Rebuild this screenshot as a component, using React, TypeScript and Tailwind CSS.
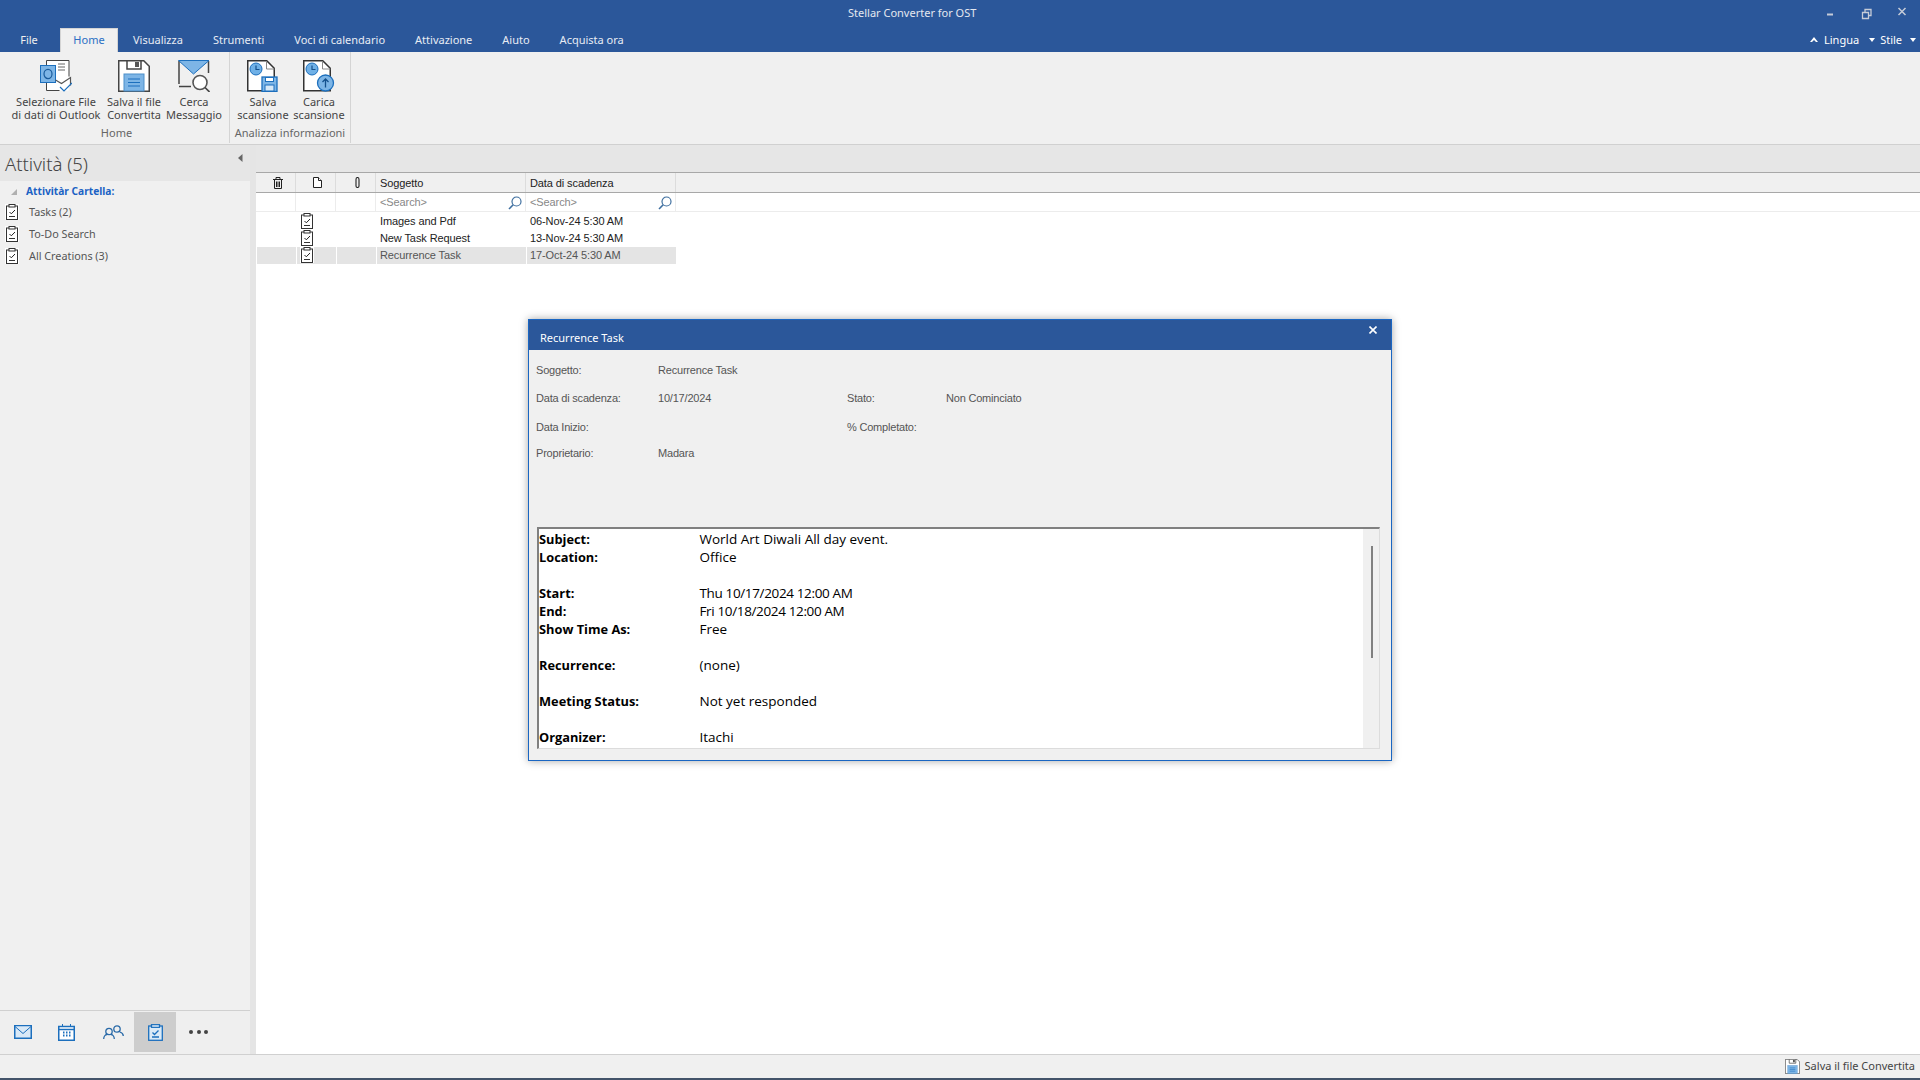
import React from "react";

const BLUE = "#1c6fbd";

const tabs = ["Visualizza", "Strumenti", "Voci di calendario", "Attivazione", "Aiuto", "Acquista ora"];

// icone ribbon
const OutlookIcon = () => (
  <svg width="32" height="32" viewBox="0 0 32 32" fill="none">
    <rect x="6.5" y=".5" width="22" height="30" fill="#fff" stroke="none" />
    <path d="M6.5 22v8.5h13M6.5 6V.5h22.500v16" stroke="#444" />
    <rect x=".5" y="5.5" width="15" height="17" fill="#7db5e6" stroke={BLUE} />
    <ellipse cx="8" cy="14" rx="4" ry="4.6" stroke="#1a5c9c" strokeWidth="1.2" />
    <path d="M18 4h7M18 7h7M18 10h7" stroke="#666" />
    <path d="M15.5 20l6 3.5 9-6v8" stroke="#555" strokeWidth="1.2" fill="#fff" />
    <path d="M20 27l4 4 8-8" stroke={BLUE} strokeWidth="1.2" />
  </svg>
);

const SaveIcon = ({ size = 32 }: { size?: number }) => (
  <svg width={size} height={size} viewBox="0 0 32 32" fill="none">
    <path d="M.75.75h25l5.5 5.5v25H.75z" fill="#fff" stroke="#444" strokeWidth="1.5" />
    <path d="M9 1v8h14V1" stroke="#444" strokeWidth="1.5" />
    <rect x="17" y="2" width="4" height="5" fill="#555" />
    <rect x="6" y="14" width="20" height="17" fill="#7db5e6" stroke="#4d8fca" />
    <path d="M10 19h12M10 22.500h12M10 26h12" stroke="#1c6fbd" strokeWidth="1.2" />
  </svg>
);

const SearchMailIcon = () => (
  <svg width="32" height="32" viewBox="0 0 32 32" fill="none">
    <path d="M1 24V1M1 26.500h12" stroke="#444" strokeWidth="1.5" />
    <path d="M30.500 1v12" stroke="#444" strokeWidth="1.5" />
    <path d="M.5.5h30.500L15.500 14z" fill="#7db5e6" stroke={BLUE} />
    <circle cx="22" cy="22.500" r="7" fill="#fff" stroke="#555" strokeWidth="1.6" />
    <path d="M27 27.500l4.500 4.500" stroke="#444" strokeWidth="1.6" />
  </svg>
);

const ScanPage = ({ children }: { children: React.ReactNode }) => (
  <svg width="32" height="32" viewBox="0 0 32 32" fill="none">
    <path d="M.75.750h19l7.500 7.500v22.500H.750z" fill="#fff" stroke="#333" strokeWidth="1.5" />
    <path d="M19.500 1v8h8" stroke="#888" />
    <circle cx="9" cy="9" r="6" fill="#6fb0e6" stroke={BLUE} />
    <path d="M9 5.500V9.500h3.500" stroke="#14508c" strokeWidth="1.2" />
    {children}
  </svg>
);

const SaveScanIcon = () => (
  <ScanPage>
    <rect x="15" y="17" width="15" height="14.500" fill="#7db5e6" stroke={BLUE} strokeWidth="1.300" />
    <rect x="18.500" y="17.500" width="8" height="4" fill="#fff" stroke={BLUE} />
    <rect x="18" y="25" width="9" height="6" fill="#d7e9f8" stroke={BLUE} />
  </ScanPage>
);

const LoadScanIcon = () => (
  <ScanPage>
    <circle cx="22.500" cy="23" r="8" fill="#7db5e6" stroke={BLUE} strokeWidth="1.300" />
    <path d="M22.500 27.500v-8M19.500 22l3-3 3 3" stroke="#14508c" strokeWidth="1.300" />
  </ScanPage>
);

// icona attività: clipboard con la spunta
const ClipIcon = () => (
  <svg width="14" height="16" viewBox="0 0 14 16" fill="none">
    <rect x="0" y="0" width="14" height="16" fill="#fff" />
    <rect x="1.500" y="2" width="11" height="13.500" stroke="#333" />
    <rect x="4" y=".5" width="6" height="2.500" fill="#fff" stroke="#333" />
    <path d="M4.500 8l1.800 1.800L10 6" stroke="#222" />
    <path d="M4 12.500h6" stroke="#333" />
  </svg>
);

const RibbonButton = ({ w, icon, lines }: { w: string; icon: React.ReactNode; lines: string[] }) => (
  <div className={`flex flex-col items-center ${w}`}>
    <div className="h-[32px] mt-[8px]">{icon}</div>
    <div className="mt-[3px] text-center text-[11px] leading-[13px] text-[#444] whitespace-nowrap">
      {lines.map((l) => (
        <div key={l}>{l}</div>
      ))}
    </div>
  </div>
);

const Ribbon = () => (
  <div className="flex h-[93px] shrink-0 border-b border-[#d0d0d0] bg-[#f0f0f0] font-['Noto_Sans',sans-serif]">
    <div className="relative flex h-[91px] w-[230px] border-r border-[#d4d4d4] pl-[8px]">
      <RibbonButton w="w-[96px] mr-[2px]" icon={<OutlookIcon />} lines={["Selezionare File", "di dati di Outlook"]} />
      <RibbonButton w="w-[56px] mr-[4px]" icon={<SaveIcon />} lines={["Salva il file", "Convertita"]} />
      <RibbonButton w="w-[56px]" icon={<SearchMailIcon />} lines={["Cerca", "Messaggio"]} />
      <div className="absolute bottom-[3px] left-0 w-full pl-[4px] text-center text-[11px] leading-[14px] text-[#666]">Home</div>
    </div>
    <div className="relative flex h-[91px] w-[121px] border-r border-[#d4d4d4] pl-[5px]">
      <RibbonButton w="w-[56px]" icon={<SaveScanIcon />} lines={["Salva", "scansione"]} />
      <RibbonButton w="w-[56px]" icon={<LoadScanIcon />} lines={["Carica", "scansione"]} />
      <div className="absolute bottom-[3px] left-0 w-full text-center text-[11px] leading-[14px] text-[#666] whitespace-nowrap">Analizza informazioni</div>
    </div>
  </div>
);

const TitleBar = () => (
  <div className="relative h-[52px] shrink-0 bg-[#2b579a] font-['Noto_Sans',sans-serif] text-white">
    <div className="absolute left-[848px] top-[4px] text-[11px] leading-[18px] text-[#e4e8f0]">Stellar Converter for OST</div>
    {/* controlli finestra */}
    <svg className="absolute left-[1824px] top-[6px]" width="90" height="18" viewBox="0 0 90 18" fill="none" stroke="#c6ccd8">
      <path d="M3 8.500h6" strokeWidth="2" />
      <path d="M38.500 6.500h6v6h-6zM41 6V3.500h6v6h-2" strokeWidth="1.300" />
      <path d="M74.500 2l7 7M81.500 2l-7 7" strokeWidth="1.500" />
    </svg>
    <div className="absolute bottom-0 left-0 flex h-[24px] items-stretch text-[11px]">
      <div className="flex w-[60px] items-center justify-center pr-[2px] text-[#f0f0f0]">File</div>
      <div className="flex w-[58px] items-center justify-center border-x border-t border-[#d4d4d4] bg-[#f0f0f0] text-[#2b6fc4]">Home</div>
      {tabs.map((t) => (
        <div key={t} className="flex items-center px-[15px] text-[#e8ecf4] whitespace-nowrap">
          {t}
        </div>
      ))}
    </div>
    <div className="absolute bottom-0 left-[1809px] flex h-[24px] items-center text-[11px]">
      <svg width="10" height="6" viewBox="0 0 10 6" className="mr-[5px]"><path d="M5 0l4 5H7L5 3 3 5H1z" fill="#fff" /></svg>
      <span className="mr-[10px]">Lingua</span>
      <span className="mr-[5px] text-[0px]"><svg width="6" height="4" viewBox="0 0 6 4"><path d="M0 0h6L3 4z" fill="#fff" /></svg></span>
      <span className="mr-[8px]">Stile</span>
      <svg width="6" height="4" viewBox="0 0 6 4"><path d="M0 0h6L3 4z" fill="#fff" /></svg>
    </div>
  </div>
);

const folders = ["Tasks (2)", "To-Do Search", "All Creations (3)"];

const Sidebar = () => (
  <div className="flex w-[256px] shrink-0 border-r-[6px] border-[#e5e5e5] bg-[#f0f0f0] font-['Noto_Sans',sans-serif]">
    <div className="flex w-[250px] flex-col">
      <div className="relative h-[36px] shrink-0 bg-[#e6e6e6] pl-[5px] pt-[3px] text-[18.500px] font-light leading-[32px] text-[#444]">
        Attività (5)
        <svg className="absolute left-[238px] top-[9px]" width="5" height="8" viewBox="0 0 5 8"><path d="M4.500 0v8L0 4z" fill="#666" /></svg>
      </div>
      <div className="flex-1 pt-[2px]">
        <div className="flex h-[17px] items-center text-[10.200px] font-bold text-[#1b62c4]">
          <svg className="ml-[11px] mr-[9px]" width="6" height="6" viewBox="0 0 6 6"><path d="M6 0v6H0z" fill="#b0b0b0" /></svg>
          Attivitàr Cartella:
        </div>
        <div className="mt-[4px] flex flex-col gap-[6px]">
          {folders.map((f) => (
            <div key={f} className="flex h-[16px] items-center pl-[5px] text-[10.800px] text-[#555]">
              <ClipIcon />
              <span className="ml-[10px]">{f}</span>
            </div>
          ))}
        </div>
      </div>
      <div className="flex h-[44px] shrink-0 items-center border-t border-[#d0d0d0] bg-[#efefef] pb-[1px]">
        <svg className="ml-[14px]" width="18" height="14" viewBox="0 0 18 14" fill="#d9e9f7" stroke={BLUE}><rect x=".75" y=".75" width="16.500" height="12.500" strokeWidth="1.500" /><path d="M1 1.500l8 7 8-7" /></svg>
        <svg className="ml-[26px]" width="17" height="17" viewBox="0 0 17 17" fill="none" stroke={BLUE}><rect x=".75" y="2.500" width="15.500" height="13.750" fill="#fff" strokeWidth="1.500" /><path d="M1 5.500h15" strokeWidth="1.500" /><path d="M4.500 0v3M12.500 0v3" /><path d="M5 8.500h1.500M8 8.500h1.500M11 8.500h1.500M5 11.500h1.500M8 11.500h1.500M11 11.500h1.500" strokeWidth="2" /></svg>
        <svg className="ml-[28px]" width="21" height="15" viewBox="0 0 21 15" fill="none" stroke="#2a6aa8" strokeWidth="1.300"><circle cx="6" cy="6.500" r="3.200" /><path d="M.7 14c0-3 2-4.500 3.500-4.500M11.300 14c0-3-2-4.500-3.500-4.500" /><circle cx="14" cy="4" r="3.200" /><path d="M20.300 11c0-2.500-2-3.500-3.500-4" /></svg>
        <div className="ml-[10px] flex h-[40px] w-[42px] items-center justify-center bg-[#cdcdcd]">
          <svg width="15" height="17" viewBox="0 0 15 17" fill="#dbeaf7" stroke={BLUE} strokeWidth="1.300"><rect x=".7" y="2" width="13.600" height="14.300" /><rect x="3.500" y=".7" width="8" height="2.600" fill="#fff" /><path d="M4.500 8.500l2 2 4-4M4 13h7" fill="none" /></svg>
        </div>
        <div className="ml-[13px] flex gap-[3.500px]">
          <span className="size-[4px] rounded-full bg-[#444]" />
          <span className="size-[4px] rounded-full bg-[#444]" />
          <span className="size-[4px] rounded-full bg-[#444]" />
        </div>
      </div>
    </div>
  </div>
);

const colWidths = ["w-[39px]", "w-[40px]", "w-[40px]", "w-[150px]", "w-[150px]"];

const rows = [
  ["Images and Pdf", "06-Nov-24 5:30 AM"],
  ["New Task Request", "13-Nov-24 5:30 AM"],
  ["Recurrence Task", "17-Oct-24 5:30 AM"],
];

const Magnifier = () => (
  <svg width="14" height="14" viewBox="0 0 14 14" fill="none" stroke="#3f6f9f" strokeWidth="1.200">
    <circle cx="8.500" cy="5.500" r="4.500" />
    <path d="M5.200 8.800L1 13" strokeWidth="1.600" />
  </svg>
);

const TaskTable = () => (
  <div className="font-['Liberation_Sans',sans-serif] text-[11px] tracking-[-0.1px] text-[#333]">
    <div className="h-[27px] bg-[#e6e6e6]" />
    <div className="flex h-[21px] border-y border-[#a8a8a8] bg-[#f0f0f0] pl-px">
      <div className={`${colWidths[0]} flex items-center justify-center border-r border-[#dcdcdc] pl-[3px]`}>
        <svg width="10" height="12" viewBox="0 0 10 12" fill="none" stroke="#222"><path d="M0 2.500h10M3 2V.5h4V2M1.500 3v8.500h7V3M3.500 4.500v5.500M5 4.500v5.500M6.500 4.500v5.500" /></svg>
      </div>
      <div className={`${colWidths[1]} flex items-center justify-center border-r border-[#dcdcdc] pl-[3px]`}>
        <svg width="9" height="11" viewBox="0 0 9 11" fill="#fff" stroke="#222"><path d="M.5.5h5l3 3v7h-8z" /><path d="M5.500.5v3h3" /></svg>
      </div>
      <div className={`${colWidths[2]} flex items-center justify-center border-r border-[#dcdcdc] pl-[3px]`}>
        <svg width="7" height="11" viewBox="0 0 7 11" fill="none" stroke="#222"><path d="M5 3v6a1.500 1.500 0 01-3 0V2.500a1.500 2 0 013 0V8" strokeWidth="1.100" /></svg>
      </div>
      <div className={`${colWidths[3]} flex items-center border-r border-[#dcdcdc] pl-[4px] pt-[1px] text-[#222]`}>Soggetto</div>
      <div className={`${colWidths[4]} flex items-center border-r border-[#dcdcdc] pl-[4px] pt-[1px] text-[#222]`}>Data di scadenza</div>
    </div>
    <div className="flex h-[19px] border-b border-[#ececec] pl-px">
      <div className={`${colWidths[0]} border-r border-[#ececec]`} />
      <div className={`${colWidths[1]} border-r border-[#ececec]`} />
      <div className={`${colWidths[2]} border-r border-[#ececec]`} />
      <div className={`${colWidths[3]} flex items-center justify-between border-r border-[#ececec] pl-[4px] pr-[3px] pt-[1px] text-[#888]`}>&lt;Search&gt;<Magnifier /></div>
      <div className={`${colWidths[4]} flex items-center justify-between border-r border-[#ececec] pl-[4px] pr-[3px] pt-[1px] text-[#888]`}>&lt;Search&gt;<Magnifier /></div>
    </div>
    <div className="pt-[1px] pl-[1px]">
      {rows.map((r, i) => {
        const sel = i === 2;
        const cell = sel ? "bg-[#e4e4e4] border-r border-white" : "";
        return (
          <div key={r[0]} className={`flex h-[17px] items-center ${sel ? "text-[#555]" : "text-[#222]"}`}>
            <div className={`h-full w-[40px] ${cell}`} />
            <div className={`flex h-full w-[40px] items-center pl-[3px] ${cell}`}>
              <span className="-mt-[2px] bg-white"><ClipIcon /></span>
            </div>
            <div className={`h-full w-[40px] ${cell}`} />
            <div className={`flex h-full w-[150px] items-center pl-[3px] ${cell}`}>{r[0]}</div>
            <div className={`flex h-full w-[149px] items-center pl-[3px] ${sel ? "bg-[#e4e4e4]" : ""}`}>{r[1]}</div>
          </div>
        );
      })}
    </div>
  </div>
);

const BodyRow = ({ label, value, narrow }: { label?: string; value?: string; narrow?: boolean }) => (
  <div className="flex h-[18px] items-baseline leading-[18px]">
    <div className="w-[160.500px] text-[12.800px] font-bold text-black">{label}</div>
    <div className={narrow ? "tracking-[-0.36px] text-black" : "text-black"}>{value}</div>
  </div>
);

const TaskDialog = () => (
  <div className="absolute left-[528px] top-[319px] flex h-[442px] w-[864px] flex-col border border-[#1a66c2] bg-[#f0f0f0] shadow-[0_0_8px_rgba(0,0,0,0.35)]">
    <div className="relative flex h-[30px] shrink-0 items-center bg-[#2b579a] pl-[11px] pt-[6px] font-['Noto_Sans',sans-serif] text-[11px] text-white">
      Recurrence Task
      <svg className="absolute right-[14px] top-[6px]" width="8" height="8" viewBox="0 0 8 8" stroke="#fff" strokeWidth="1.600"><path d="M.5.5l7 7M7.500.5l-7 7" /></svg>
    </div>
    <div className="h-[177px] shrink-0 font-['Liberation_Sans',sans-serif] text-[11px] tracking-[-0.2px] text-[#555]">
      <div className="grid grid-cols-[122px_189px_99px_1fr] grid-rows-[28px_28px_30px_22px] pl-[7px] pt-[6px]">
        <div className="flex items-center">Soggetto:</div>
        <div className="col-span-3 flex items-center">Recurrence Task</div>
        <div className="flex items-center">Data di scadenza:</div>
        <div className="flex items-center">10/17/2024</div>
        <div className="flex items-center">Stato:</div>
        <div className="flex items-center">Non Cominciato</div>
        <div className="flex items-center">Data Inizio:</div>
        <div />
        <div className="flex items-center">% Completato:</div>
        <div />
        <div className="flex items-center">Proprietario:</div>
        <div className="col-span-3 flex items-center">Madara</div>
      </div>
    </div>
    <div className="ml-[8px] mr-[11px] flex h-[222px] overflow-hidden border-l-2 border-t-2 border-b border-r border-l-[#808080] border-t-[#808080] border-b-[#dcdcdc] border-r-[#dcdcdc]">
      <div className="flex-1 overflow-hidden bg-white pt-[1px] font-['Open_Sans',sans-serif] text-[13.500px]">
        <BodyRow label="Subject:" value="World Art Diwali All day event." />
        <BodyRow label="Location:" value="Office" />
        <BodyRow />
        <BodyRow label="Start:" value="Thu 10/17/2024 12:00 AM" narrow />
        <BodyRow label="End:" value="Fri 10/18/2024 12:00 AM" narrow />
        <BodyRow label="Show Time As:" value="Free" />
        <BodyRow />
        <BodyRow label="Recurrence:" value="(none)" />
        <BodyRow />
        <BodyRow label="Meeting Status:" value="Not yet responded" />
        <BodyRow />
        <BodyRow label="Organizer:" value="Itachi" />
        <BodyRow />
      </div>
      <div className="w-[16px] shrink-0 bg-[#f0f0f0] pl-[8px] pt-[17px]">
        <div className="h-[112px] w-[2px] bg-[#808080]" />
      </div>
    </div>
  </div>
);

export default function App() {
  return (
    <div className="relative flex h-[1080px] w-[1920px] flex-col overflow-hidden bg-white">
      <TitleBar />
      <Ribbon />
      <div className="flex min-h-0 flex-1">
        <Sidebar />
        <div className="flex-1 bg-white">
          <TaskTable />
        </div>
      </div>
      <div className="flex h-[24px] shrink-0 items-center justify-end border-t border-[#d0d0d0] bg-[#f0f0f0] pr-[5px] font-['Noto_Sans',sans-serif] text-[11px] text-[#444]">
        <SaveIcon size={15} />
        <span className="ml-[5px]">Salva il file Convertita</span>
      </div>
      <div className="h-[2px] shrink-0 bg-[#44546a]" />
      <TaskDialog />
    </div>
  );
}
